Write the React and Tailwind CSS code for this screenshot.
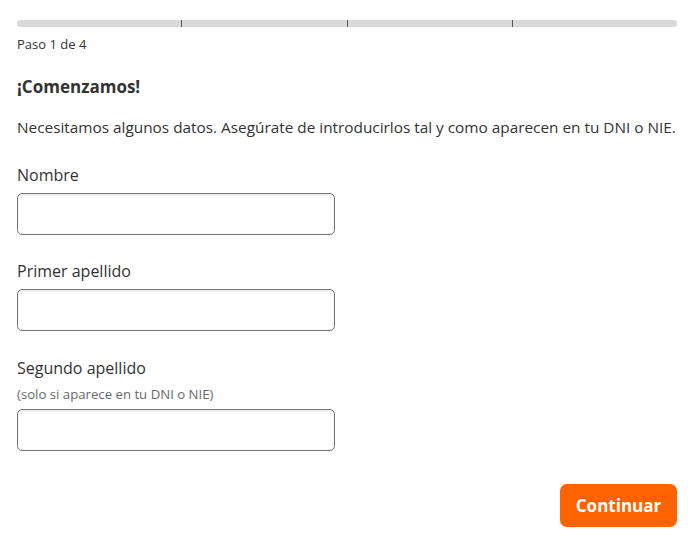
import React from "react";

function Field({ label, hint, mt }) {
  return (
    <div className={`flex flex-col ${mt}`}>
      <label className="text-[16px] leading-[22px] text-[#333333]">{label}</label>
      {hint && (
        <span className="mt-[6px] text-[13.2px] leading-[18px] text-[#696969]">{hint}</span>
      )}
      <input
        type="text"
        className={`${hint ? "mt-[6px]" : "mt-[7px]"} h-[42px] w-[318px] rounded-[5px] border border-[#767676] bg-white shadow-[inset_0_2px_2px_rgba(0,0,0,0.08)] outline-none`}
      />
    </div>
  );
}

export default function App() {
  return (
    <div
      className="min-h-[551px] w-full bg-white pl-[17px] pr-[20px] pt-[20px] text-[#333333]"
      style={{ fontFamily: '"Open Sans", "Noto Sans", sans-serif' }}
    >
      <div className="flex h-[7px] w-[660px] items-stretch">
        <div className="flex-1 rounded-l-full bg-[#d9d9d9]" />
        <div className="w-px bg-[#555555]" />
        <div className="flex-1 bg-[#d9d9d9]" />
        <div className="w-px bg-[#555555]" />
        <div className="flex-1 bg-[#d9d9d9]" />
        <div className="w-px bg-[#555555]" />
        <div className="flex-1 rounded-r-full bg-[#d9d9d9]" />
      </div>
      <p className="mt-[8px] text-[13px] leading-[18px] text-[#333333]">Paso 1 de 4</p>
      <h1 className="mt-[22px] text-[17px] font-bold leading-[24px] text-[#333333]">¡Comenzamos!</h1>
      <p className="mt-[17px] whitespace-nowrap text-[15.35px] leading-[22px] text-[#333333]">
        Necesitamos algunos datos. Asegúrate de introducirlos tal y como aparecen en tu DNI o NIE.
      </p>
      <Field label="Nombre" mt="mt-[26px]" />
      <Field label="Primer apellido" mt="mt-[25px]" />
      <Field label="Segundo apellido" hint="(solo si aparece en tu DNI o NIE)" mt="mt-[26px]" />
      <div className="mt-[33px] flex w-[660px] justify-end">
        <button className="h-[43px] w-[117px] rounded-[7px] bg-[#ff6200] text-[17px] font-bold text-white">
          Continuar
        </button>
      </div>
    </div>
  );
}
